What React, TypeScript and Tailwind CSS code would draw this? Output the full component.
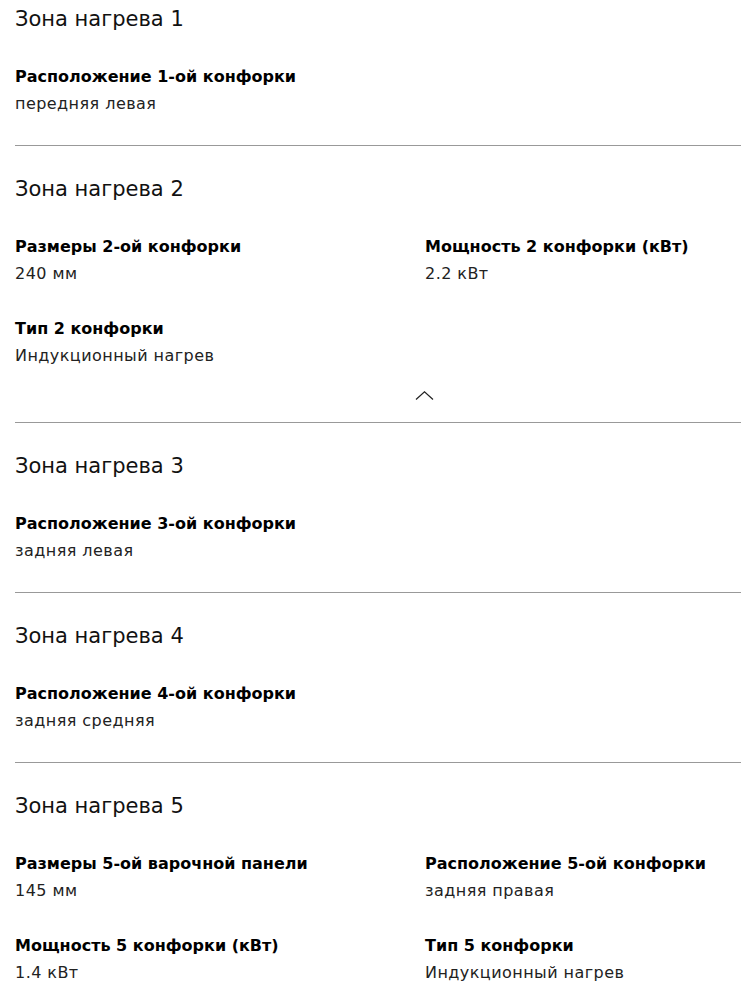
type Spec = { label: string; value: string };

type Zone = { title: string; specs: Spec[]; collapsible?: boolean };

const zones: Zone[] = [
  {
    title: "Зона нагрева 1",
    specs: [{ label: "Расположение 1-ой конфорки", value: "передняя левая" }],
  },
  {
    title: "Зона нагрева 2",
    specs: [
      { label: "Размеры 2-ой конфорки", value: "240 мм" },
      { label: "Мощность 2 конфорки (кВт)", value: "2.2 кВт" },
      { label: "Тип 2 конфорки", value: "Индукционный нагрев" },
    ],
    collapsible: true,
  },
  {
    title: "Зона нагрева 3",
    specs: [{ label: "Расположение 3-ой конфорки", value: "задняя левая" }],
  },
  {
    title: "Зона нагрева 4",
    specs: [{ label: "Расположение 4-ой конфорки", value: "задняя средняя" }],
  },
  {
    title: "Зона нагрева 5",
    specs: [
      { label: "Размеры 5-ой варочной панели", value: "145 мм" },
      { label: "Расположение 5-ой конфорки", value: "задняя правая" },
      { label: "Мощность 5 конфорки (кВт)", value: "1.4 кВт" },
      { label: "Тип 5 конфорки", value: "Индукционный нагрев" },
    ],
  },
];

function ZoneSection({ zone, first }: { zone: Zone; first: boolean }) {
  return (
    <section
      className={`${first ? "pt-[5px]" : "border-t border-[#999999] pt-[29px]"} ${
        zone.collapsible ? "" : "pb-[28px]"
      }`}
    >
      <h2 className="text-[21px] leading-[28px] font-normal text-[#111]">{zone.title}</h2>
      <dl className="mt-[30px] grid grid-cols-[410px_1fr] gap-y-[28px]">
        {zone.specs.map((s) => (
          <div key={s.label}>
            <dt className="text-[16px] leading-[27px] font-bold text-black">{s.label}</dt>
            <dd className="text-[16px] leading-[27px] tracking-[0.45px] text-[#222]">{s.value}</dd>
          </div>
        ))}
      </dl>
      {zone.collapsible ? (
        <div className="flex h-[53px] items-center pl-[400px]">
          <svg width="19" height="9" viewBox="0 0 19 9" fill="none" stroke="#222" strokeWidth="1.2">
            <path d="M1 8.5 L9.5 0.8 L18 8.5" />
          </svg>
        </div>
      ) : null}
    </section>
  );
}

export default function App() {
  return (
    <div className="h-[995px] w-[741px] overflow-hidden bg-white pl-[15px] font-['DejaVu_Sans',Verdana,sans-serif]">
      {zones.map((z, i) => (
        <ZoneSection key={z.title} zone={z} first={i === 0} />
      ))}
    </div>
  );
}
